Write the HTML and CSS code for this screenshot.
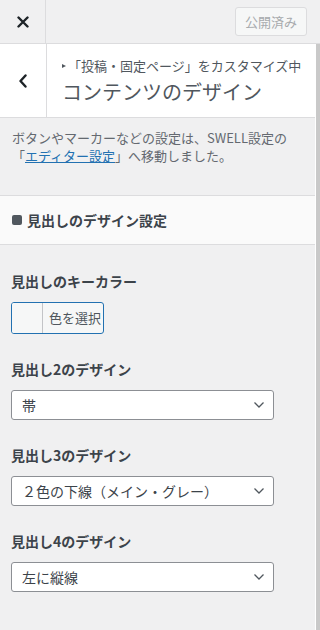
FILE: index.html
```html
<!DOCTYPE html>
<html lang="ja">
<head>
<meta charset="utf-8">
<link rel="stylesheet" href="styles.css">
</head>
<body>
<header class="topbar">
  <button class="close" aria-label="閉じる">
    <svg width="12" height="12" viewBox="0 0 12 12"><path d="M1.5 1.5 L10.5 10.5 M10.5 1.5 L1.5 10.5" stroke="#1d2327" stroke-width="2.4" stroke-linecap="round"/></svg>
  </button>
  <div class="spacer"></div>
  <button class="publish">公開済み</button>
</header>
<div class="body">
  <main class="panel">
    <div class="titlebar">
      <button class="back" aria-label="戻る">
        <svg width="10" height="14" viewBox="0 0 10 14"><path d="M7.5 1.5 L2.5 7 L7.5 12.5" fill="none" stroke="#1d2327" stroke-width="2.4" stroke-linecap="round" stroke-linejoin="round"/></svg>
      </button>
      <div class="titles">
        <div class="crumb"><span class="tri"></span>「投稿・固定ページ」をカスタマイズ中</div>
        <h1 class="title">コンテンツのデザイン</h1>
      </div>
    </div>
    <p class="desc">ボタンやマーカーなどの設定は、SWELL設定の<br>「<a href="#">エディター設定</a>」へ移動しました。</p>
    <div class="sechead"><span class="sq"></span>見出しのデザイン設定</div>
    <div class="controls">
      <div class="control">
        <div class="label">見出しのキーカラー</div>
        <button class="color"><span class="swatch"></span><span class="ctext">色を選択</span></button>
      </div>
      <div class="control">
        <div class="label">見出し2のデザイン</div>
        <div class="select"><span>帯</span><svg class="chev" width="12" height="8" viewBox="0 0 12 8"><path d="M1.5 1.5 L6 6 L10.5 1.5" fill="none" stroke="#50575e" stroke-width="1.3"/></svg></div>
      </div>
      <div class="control">
        <div class="label">見出し3のデザイン</div>
        <div class="select"><span>２色の下線（メイン・グレー）</span><svg class="chev" width="12" height="8" viewBox="0 0 12 8"><path d="M1.5 1.5 L6 6 L10.5 1.5" fill="none" stroke="#50575e" stroke-width="1.3"/></svg></div>
      </div>
      <div class="control">
        <div class="label">見出し4のデザイン</div>
        <div class="select"><span>左に縦線</span><svg class="chev" width="12" height="8" viewBox="0 0 12 8"><path d="M1.5 1.5 L6 6 L10.5 1.5" fill="none" stroke="#50575e" stroke-width="1.3"/></svg></div>
      </div>
    </div>
  </main>
  <div class="scrollbar"></div>
</div>
</body>
</html>
```
FILE: styles.css
```css
* { box-sizing: border-box; }
html, body { margin: 0; padding: 0; }
body {
  width: 320px;
  height: 630px;
  overflow: hidden;
  background: #f0f0f1;
  font-family: "Noto Sans CJK JP", "Noto Sans", sans-serif;
  color: #50575e;
}
button { font-family: inherit; }
.topbar {
  display: flex;
  align-items: center;
  height: 44px;
  border-bottom: 1px solid #dcdcde;
  background: #f0f0f1;
}
.close {
  width: 46px;
  height: 43px;
  border: 0;
  border-right: 1px solid #dcdcde;
  background: transparent;
  display: flex;
  align-items: center;
  justify-content: center;
  padding: 0;
}
.spacer { flex: 1; }
.publish {
  width: 72px;
  height: 29px;
  margin-right: 13px;
  border: 1px solid #dcdcde;
  border-radius: 3px;
  background: #f6f7f7;
  color: #a7aaad;
  font-size: 13px;
  padding: 0;
}
.body {
  display: flex;
  height: 586px;
}
.panel {
  flex: none;
  width: 316px;
  border-right: 1px solid #fff;
}
.scrollbar {
  flex: 1;
  background: #c9c9c9;
}
.titlebar {
  display: flex;
  height: 74px;
  background: #fff;
  border-bottom: 1px solid #dcdcde;
}
.back {
  width: 47px;
  border: 0;
  border-right: 1px solid #dcdcde;
  background: #fff;
  display: flex;
  align-items: center;
  justify-content: center;
  padding: 0;
}
.titles {
  padding: 13px 0 0 15px;
}
.crumb {
  font-size: 13px;
  line-height: 18px;
  color: #50575e;
  display: flex;
  align-items: center;
}
.tri {
  display: inline-block;
  width: 0; height: 0;
  border-left: 4px solid #50575e;
  border-top: 2.5px solid transparent;
  border-bottom: 2.5px solid transparent;
  margin-right: 2px;
}
.title {
  margin: 4px 0 0;
  font-size: 20px;
  font-weight: 400;
  line-height: 26px;
  color: #50575e;
}
.desc {
  margin: 0;
  height: 78px;
  padding: 11px 12px 0;
  font-size: 13px;
  line-height: 18px;
  color: #646970;
  border-bottom: 1px solid #dcdcde;
}
.desc a { color: #2271b1; text-decoration: underline; }
.sechead {
  height: 49px;
  background: #fafafa;
  border-bottom: 1px solid #dcdcde;
  display: flex;
  align-items: center;
  padding-left: 12px;
  padding-bottom: 1px;
  font-size: 14px;
  font-weight: 700;
  color: #3c434a;
}
.sq {
  width: 10px; height: 10px;
  background: #50575e;
  border-radius: 2px;
  margin-right: 5px;
}
.controls {
  padding: 26px 0 0 11px;
  display: flex;
  flex-direction: column;
  gap: 25px;
}
.label {
  font-size: 14px;
  font-weight: 700;
  line-height: 20px;
  color: #3c434a;
  margin-bottom: 11px;
}
.color {
  display: flex;
  width: 93px;
  height: 32px;
  border: 1px solid #2271b1;
  border-radius: 3px;
  background: #f6f7f7;
  padding: 0;
  overflow: hidden;
}
.swatch {
  width: 31px;
  height: 100%;
  border-right: 1px solid #c3c4c7;
  background: #f6f7f7;
}
.ctext {
  font-size: 13px;
  line-height: 30px;
  padding-left: 6px;
  color: #50575e;
}
.select {
  width: 263px;
  height: 30px;
  border: 1px solid #8c8f94;
  border-radius: 3px;
  background: #fff;
  display: flex;
  align-items: center;
  justify-content: space-between;
  padding: 0 8px 0 10px;
  font-size: 14px;
  color: #3c434a;
}
.chev { flex: none; }
```
